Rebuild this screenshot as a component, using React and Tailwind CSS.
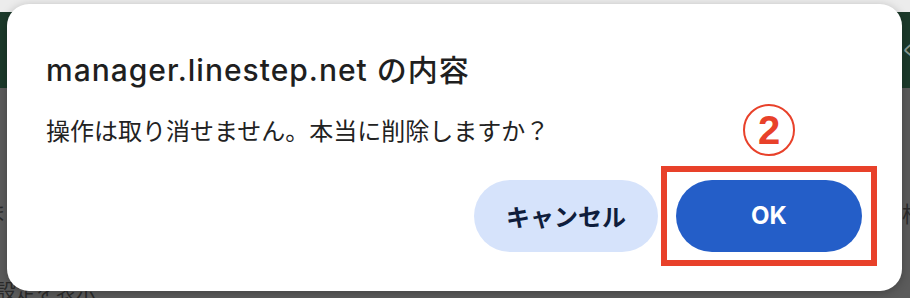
import React from "react";

export default function App() {
  return (
    <div className="relative w-[910px] h-[298px] overflow-hidden bg-[#5b5b5b] font-['Roboto','Noto_Sans_CJK_JP',sans-serif]">
      {/* background page */}
      <div className="h-[12px] bg-[#ececec]" />
      <div className="h-[76px] bg-[#1c3a2b] flex justify-end items-start pt-[28px]">
        <span className="text-[22px] leading-none text-[#8a9a92] mr-[-12px]">ぐ</span>
      </div>
      <div className="flex justify-between items-start pt-[116px]">
        <span className="text-[20px] leading-none text-[#2a2a2a] ml-[-14px]">ま</span>
        <span className="text-[22px] leading-none text-[#2a2a2a] mr-[-14px]">梢</span>
      </div>
      <div className="pt-[56px] pl-0 text-[20px] leading-none text-[#2a2a2a] ml-[-4px]">設定を表示</div>

      {/* dialog */}
      <div className="absolute left-[7px] top-[4px] w-[895px] h-[287px] rounded-[22px] bg-white shadow-[0_2px_10px_rgba(0,0,0,0.25)] flex flex-col pl-[39px] pr-[25px] text-[#1f1f1f]">
        <div className="mt-[48px] text-[30px] leading-[36px] tracking-[1px] font-medium font-['Inter','Noto_Sans_CJK_JP',sans-serif] text-[#1f1f1f]">
          manager.linestep.net の内容
        </div>
        <div className="mt-[27px] text-[24px] leading-[30px] font-['Noto_Sans_CJK_JP',sans-serif] text-[#222]">
          操作は取り消せません。本当に削除しますか？
        </div>
        <div className="mt-[21px] flex justify-end items-center gap-[3px]">
          <button className="w-[184px] h-[72px] rounded-full bg-[#d6e3fb] text-[#0f1d3c] text-[24px] font-bold font-['Noto_Sans_CJK_JP',sans-serif]">
            キャンセル
          </button>
          <div className="relative border-[6px] border-[#e8412a] px-[9px] py-[8px]">
            <div className="absolute left-1/2 top-[-68px] -translate-x-1/2 w-[52px] h-[52px] rounded-full border-[2.5px] border-[#e8412a] flex items-center justify-center text-[#e8412a] text-[40px] font-bold leading-none font-['Liberation_Sans',sans-serif]">
              2
            </div>
            <button className="w-[186px] h-[72px] rounded-full bg-[#245ec8] text-white text-[24px] font-bold font-['Inter',sans-serif]">
              OK
            </button>
          </div>
        </div>
      </div>
    </div>
  );
}
